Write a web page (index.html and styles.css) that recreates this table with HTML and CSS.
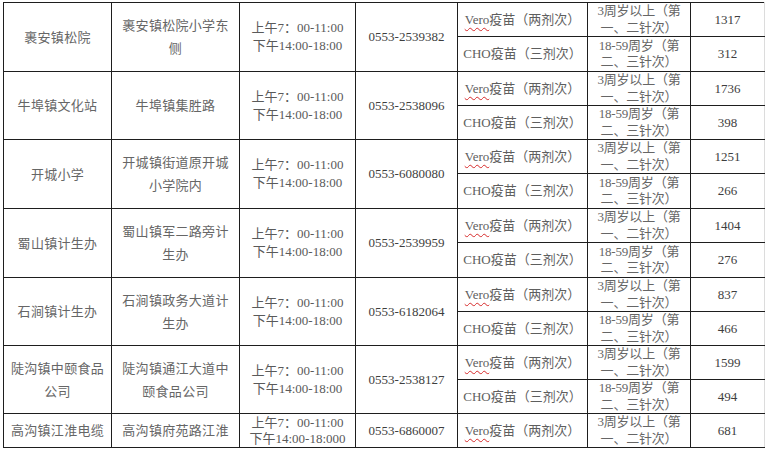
FILE: index.html
```html
<!DOCTYPE html>
<html lang="zh-CN">
<head>
<meta charset="utf-8">
<link rel="stylesheet" href="styles.css">
</head>
<body>
<table class="grid">
  <colgroup>
    <col class="c1"><col class="c2"><col class="c3"><col class="c4"><col class="c5"><col class="c6"><col class="c7">
  </colgroup>
  <tbody>
    <tr class="r34">
      <td rowspan="2" class="name">裹安镇松院</td>
      <td rowspan="2" class="addr">裹安镇松院小学东<br>侧</td>
      <td rowspan="2" class="time">上午7：00-11:00<br>下午14:00-18:00</td>
      <td rowspan="2" class="tel">0553-2539382</td>
      <td class="vac"><span class="sp">Vero</span>疫苗（两剂次）</td>
      <td class="age">3周岁以上（第<br>一、二针次）</td>
      <td class="num">1317</td>
    </tr>
    <tr class="r35">
      <td class="vac">CHO疫苗（三剂次）</td>
      <td class="age">18-59周岁（第<br>二、三针次）</td>
      <td class="num">312</td>
    </tr>

    <tr class="r34">
      <td rowspan="2" class="name">牛埠镇文化站</td>
      <td rowspan="2" class="addr">牛埠镇集胜路</td>
      <td rowspan="2" class="time">上午7：00-11:00<br>下午14:00-18:00</td>
      <td rowspan="2" class="tel">0553-2538096</td>
      <td class="vac"><span class="sp">Vero</span>疫苗（两剂次）</td>
      <td class="age">3周岁以上（第<br>一、二针次）</td>
      <td class="num">1736</td>
    </tr>
    <tr class="r34">
      <td class="vac">CHO疫苗（三剂次）</td>
      <td class="age">18-59周岁（第<br>二、三针次）</td>
      <td class="num">398</td>
    </tr>

    <tr class="r34">
      <td rowspan="2" class="name">开城小学</td>
      <td rowspan="2" class="addr">开城镇街道原开城<br>小学院内</td>
      <td rowspan="2" class="time">上午7：00-11:00<br>下午14:00-18:00</td>
      <td rowspan="2" class="tel">0553-6080080</td>
      <td class="vac"><span class="sp">Vero</span>疫苗（两剂次）</td>
      <td class="age">3周岁以上（第<br>一、二针次）</td>
      <td class="num">1251</td>
    </tr>
    <tr class="r35">
      <td class="vac">CHO疫苗（三剂次）</td>
      <td class="age">18-59周岁（第<br>二、三针次）</td>
      <td class="num">266</td>
    </tr>

    <tr class="r34">
      <td rowspan="2" class="name">蜀山镇计生办</td>
      <td rowspan="2" class="addr">蜀山镇军二路旁计<br>生办</td>
      <td rowspan="2" class="time">上午7：00-11:00<br>下午14:00-18:00</td>
      <td rowspan="2" class="tel">0553-2539959</td>
      <td class="vac"><span class="sp">Vero</span>疫苗（两剂次）</td>
      <td class="age">3周岁以上（第<br>一、二针次）</td>
      <td class="num">1404</td>
    </tr>
    <tr class="r35">
      <td class="vac">CHO疫苗（三剂次）</td>
      <td class="age">18-59周岁（第<br>二、三针次）</td>
      <td class="num">276</td>
    </tr>

    <tr class="r34">
      <td rowspan="2" class="name">石涧镇计生办</td>
      <td rowspan="2" class="addr">石涧镇政务大道计<br>生办</td>
      <td rowspan="2" class="time">上午7：00-11:00<br>下午14:00-18:00</td>
      <td rowspan="2" class="tel">0553-6182064</td>
      <td class="vac"><span class="sp">Vero</span>疫苗（两剂次）</td>
      <td class="age">3周岁以上（第<br>一、二针次）</td>
      <td class="num">837</td>
    </tr>
    <tr class="r34">
      <td class="vac">CHO疫苗（三剂次）</td>
      <td class="age">18-59周岁（第<br>二、三针次）</td>
      <td class="num">466</td>
    </tr>

    <tr class="r34">
      <td rowspan="2" class="name">陡沟镇中颐食品<br>公司</td>
      <td rowspan="2" class="addr">陡沟镇通江大道中<br>颐食品公司</td>
      <td rowspan="2" class="time">上午7：00-11:00<br>下午14:00-18:00</td>
      <td rowspan="2" class="tel">0553-2538127</td>
      <td class="vac"><span class="sp">Vero</span>疫苗（两剂次）</td>
      <td class="age">3周岁以上（第<br>一、二针次）</td>
      <td class="num">1599</td>
    </tr>
    <tr class="r34">
      <td class="vac">CHO疫苗（三剂次）</td>
      <td class="age">18-59周岁（第<br>二、三针次）</td>
      <td class="num">494</td>
    </tr>

    <tr class="r33 last">
      <td class="name">高沟镇江淮电缆</td>
      <td class="addr">高沟镇府苑路江淮</td>
      <td class="time">上午7：00-11:00<br>下午14:00-18:000</td>
      <td class="tel">0553-6860007</td>
      <td class="vac"><span class="sp">Vero</span>疫苗（两剂次）</td>
      <td class="age">3周岁以上（第<br>一、二针次）</td>
      <td class="num">681</td>
    </tr>
  </tbody>
</table>
</body>
</html>
```

FILE: styles.css
```css
html, body {
  margin: 0;
  background: #ffffff;
}

body {
  padding: 2px 0 0 3px;
  font-family: "Liberation Serif", "Noto Sans CJK SC", serif;
  font-size: 13px;
  color: #444444;
}

.grid {
  border-collapse: collapse;
  table-layout: fixed;
  width: 761px;
}

.c1 { width: 108px; }
.c2 { width: 128px; }
.c3 { width: 116px; }
.c4 { width: 102px; }
.c5 { width: 130px; }
.c6 { width: 103px; }
.c7 { width: 74px; }

.grid td {
  border: 1px solid #1e1e1e;
  padding: 0;
  text-align: center;
  vertical-align: middle;
  overflow: hidden;
  white-space: nowrap;
  line-height: 16px;
}

.grid td.num {
  border-right-color: #dcdcdc;
}

.r33 { height: 33px; }
.r34 { height: 34px; }
.r35 { height: 35px; }

.grid td.name,
.grid td.addr {
  line-height: 23px;
  color: #666666;
  letter-spacing: 0.3px;
}

.grid td.time {
  line-height: 18px;
  color: #5a5a5a;
}

.grid .last td.time {
  line-height: 16px;
}

.grid .last td.name,
.grid .last td.addr {
  line-height: 16px;
}

.grid td.vac {
  color: #5e5e5e;
}

.grid td.age {
  line-height: 16.5px;
  color: #666666;
  letter-spacing: -0.2px;
}

.grid td.tel,
.grid td.num {
  color: #3e3e3e;
}

.sp {
  text-decoration: underline wavy #d62a2a;
  text-decoration-thickness: 1px;
  text-underline-offset: 3px;
}
```
